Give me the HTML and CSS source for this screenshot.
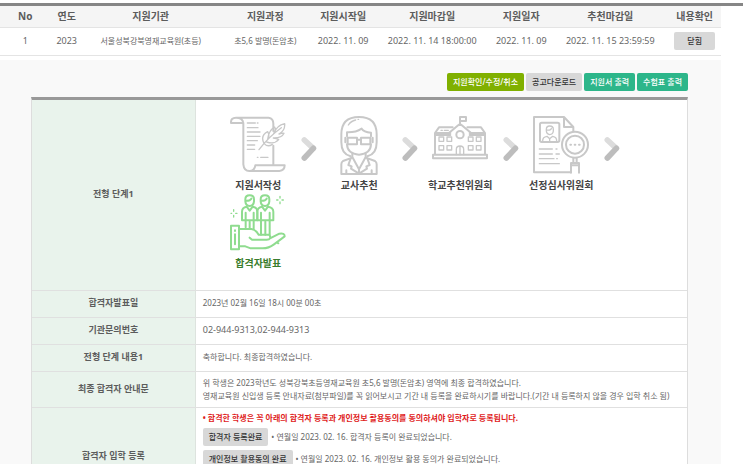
FILE: index.html
```html
<!DOCTYPE html>
<html lang="ko">
<head>
  <meta charset="UTF-8" />
  <meta name="viewport" content="width=device-width, initial-scale=1" />
  <title>지원 현황</title>
  <link rel="stylesheet" href="styles.css">
</head>
<body>
  <svg class="defs" aria-hidden="true">
    <symbol id="arrow" viewBox="0 0 54 78">
      <path d="M13 12L40 37" stroke="#dcdcdc" />
      <path d="M40 37L13 66" stroke="#bdbdbd" />
    </symbol>
  </svg>

  <div class="list-wrap">
    <table class="list">
      <colgroup>
        <col class="c-no"><col class="c-year"><col class="c-org"><col class="c-course"><col class="c-date">
        <col class="c-time"><col class="c-date"><col class="c-time"><col class="c-check">
      </colgroup>
      <thead>
        <tr>
          <th>No</th>
          <th>연도</th>
          <th>지원기관</th>
          <th>지원과정</th>
          <th>지원시작일</th>
          <th>지원마감일</th>
          <th>지원일자</th>
          <th>추천마감일</th>
          <th>내용확인</th>
        </tr>
      </thead>
      <tbody>
        <tr>
          <td class="num">1</td>
          <td class="num">2023</td>
          <td>서울성북강북영재교육원(초등)</td>
          <td>초5,6 발명(돈암초)</td>
          <td class="num">2022. 11. 09</td>
          <td class="num">2022. 11. 14 18:00:00</td>
          <td class="num">2022. 11. 09</td>
          <td class="num">2022. 11. 15 23:59:59</td>
          <td><button type="button" class="btn btn-close">닫힘</button></td>
        </tr>
      </tbody>
    </table>
  </div>

  <div class="detail-wrap">
    <div class="buttons">
      <button type="button" class="btn btn-lime">지원확인/수정/취소</button>
      <button type="button" class="btn">공고다운로드</button>
      <button type="button" class="btn btn-green">지원서 출력</button>
      <button type="button" class="btn btn-green">수험표 출력</button>
    </div>

    <table class="detail">
      <tr>
        <th>전형 단계1</th>
        <td>
          <ul class="steps">
            <li>
              <div class="step">
                <svg class="icon" viewBox="30 30 168 180">
                  <path d="M70 54H33Q32 38 48 38H146Q160 40 160 56V78M70 54V178Q72 198 88 198H178Q194 197 194 181H106Q104 198 88 198M48 38Q68 38 70 54M160 122V181" />
                  <path d="M82 54H106M112 54H114M82 68H114M82 81H120M82 94H120M82 107H112M82 120H104M82 133H104M112 157H114M122 157H144" stroke-width="4" />
                  <path d="M117 134Q145 96 184 68M132 115Q120 92 143 80Q150 92 143 103M143 103Q146 76 164 66Q169 76 161 86M161 86Q170 61 194 56Q196 76 177 87M177 87Q190 83 192 85Q185 100 160 99M160 99Q170 100 176 104Q163 119 140 111M132 115Q143 128 157 118" stroke-width="4" />
                </svg>
                <span>지원서작성</span>
              </div>
              <svg class="next"><use href="#arrow" /></svg>
            </li>
            <li>
              <div class="step">
                <svg class="icon" viewBox="34 30 168 180">
                  <path d="M93 154Q65 148 65 112V88Q65 36 118 36Q171 36 171 88V112Q171 148 143 154" />
                  <path d="M82 94V82Q108 83 126 71Q132 81 154 83V94M82 118Q83 147 118 149Q153 147 154 118" />
                  <path d="M84 98H112V118H84ZM124 98H152V118H124ZM112 104H124M77 98V112M159 98V112" />
                  <path d="M86 60Q94 48 108 45M115 43H117" stroke-width="4" />
                  <path d="M98 146V156L118 193L138 156V146M98 158L70 168Q65 171 65 178V207H171V178Q171 171 166 168L138 158M93 160L86 180L96 184L94 191L118 206L142 191L140 184L150 180L143 160M118 193V206M80 196V206M156 196V206" />
                </svg>
                <span>교사추천</span>
              </div>
              <svg class="next"><use href="#arrow" /></svg>
            </li>
            <li>
              <div class="step">
                <svg class="icon" viewBox="39 30 168 180">
                  <path d="M42 149H204V160H42ZM48 149V84M198 149V84M48 84H94M152 84H198M48 84L60 67H101M198 84L186 67H145M94 90L48 90M152 90H198" />
                  <path d="M86 87L123 56L160 87M123 56V36H141V48H123" />
                  <circle cx="123" cy="89" r="11" />
                  <path d="M60 96H74V109H60ZM84 96H98V109H84ZM148 96H162V109H148ZM172 96H186V109H172ZM60 122H74V135H60ZM84 122H98V135H84ZM148 122H162V135H148ZM172 122H186V135H172ZM112 149V133Q112 123 123 123Q134 123 134 133V149M123 126V149" stroke-width="4" />
                  <path d="M66 76H70M76 76H88" stroke-width="4" />
                </svg>
                <span>학교추천위원회</span>
              </div>
              <svg class="next"><use href="#arrow" /></svg>
            </li>
            <li>
              <div class="step">
                <svg class="icon" viewBox="44 30 168 180">
                  <path d="M158 202H47V36H137L165 66V78M137 36V66H165" />
                  <rect x="65" y="53" width="58" height="58" rx="5" />
                  <path d="M84 73Q84 63 94 63Q105 63 105 73V78Q104 88 94 89Q85 88 84 78ZM84 75Q98 77 99 70M73 109Q72 96 86 94L94 101L103 94Q116 96 115 109M94 101V109" stroke-width="4" />
                  <path d="M63 132H102M113 132H116M63 147H102M113 147H123M63 161H107M115 161H117M63 176H123" stroke-width="4" />
                  <circle cx="170" cy="119" r="39" />
                  <circle cx="170" cy="119" r="27" />
                  <path d="M156 119H158M169 119H171M182 119H184" />
                  <path d="M165 159V170M175 159V170M158 203V174H182V203M158 181H182" />
                </svg>
                <span>선정심사위원회</span>
              </div>
              <svg class="next"><use href="#arrow" /></svg>
            </li>
            <li class="on">
              <div class="step">
                <svg class="icon" viewBox="30 24 168 180">
                  <path d="M76 43Q76 31 89 31Q102 31 102 43V49Q101 62 89 63Q77 62 76 49ZM76 47Q90 48 94 41M122 43Q122 31 135 31Q148 31 148 43V49Q147 62 135 63Q123 62 122 49ZM122 47Q136 48 140 41" />
                  <path d="M80 65Q66 67 66 80V106H77V83M98 65Q112 67 112 80V106H101V83M80 65L89 77L98 65M77 106V127M101 106V131M89 110V128M77 106H101" />
                  <path d="M126 65Q112 67 112 80V106H123V83M144 65Q160 67 160 80V106H149V83M126 65L135 77L144 65M123 106V149M149 106V149M136 110V149M123 106H149" />
                  <path d="M33 122H57V193H33ZM45 136V138M45 148V178M57 132H94Q108 134 116 149H145Q153 152 150 160Q148 164 140 164H96M150 160L178 146Q194 143 194 154L162 178Q146 190 128 190H92L76 184H57M174 175H175M96 164L89 158" />
                  <path d="M180 34V39M180 51V56M170 45H174M186 45H190M41 74V79M41 91V96M33 85H35M47 85H51" stroke-width="4" />
                </svg>
                <span>합격자발표</span>
              </div>
            </li>
          </ul>
        </td>
      </tr>
      <tr>
        <th>합격자발표일</th>
        <td>2023년 02월 16일 18시 00분 00초</td>
      </tr>
      <tr>
        <th>기관문의번호</th>
        <td class="num">02-944-9313,02-944-9313</td>
      </tr>
      <tr>
        <th>전형 단계 내용1</th>
        <td>축하합니다. 최종합격하였습니다.</td>
      </tr>
      <tr>
        <th>최종 합격자 안내문</th>
        <td class="guide">
          위 학생은 2023학년도 성북강북초등영재교육원 초5,6 발명(돈암초) 영역에 최종 합격하였습니다.<br>
          영재교육원 신입생 등록 안내자료(첨부파일)를 꼭 읽어보시고 기간 내 등록을 완료하시기를 바랍니다.(기간 내 등록하지 않을 경우 입학 취소 됨)
        </td>
      </tr>
      <tr class="enroll">
        <th>합격자 입학 등록</th>
        <td>
          <strong class="notice">• 합격한 학생은 꼭 아래의 합격자 등록과 개인정보 활용동의를 동의하셔야 입학자로 등록됩니다.</strong>
          <div class="done"><button type="button" class="btn">합격자 등록완료</button> • 연월일 2023. 02. 16. 합격자 등록이 완료되었습니다.</div>
          <div class="done"><button type="button" class="btn">개인정보 활용동의 완료</button> • 연월일 2023. 02. 16. 개인정보 활용 동의가 완료되었습니다.</div>
        </td>
      </tr>
    </table>
  </div>
</body>
</html>
```

FILE: styles.css
```css
* {
  box-sizing: border-box;
}
body {
  margin: 0;
  padding-top: 3px;
  background: #fff;
  color: #666;
  font-family: "Noto Sans", "Noto Sans CJK KR", sans-serif;
  font-size: 8px;
  line-height: 12px;
}
table {
  width: 100%;
  border-collapse: separate;
  border-spacing: 0;
}
.defs {
  display: none;
}
.num {
  font-size: 9px;
}

/* application list */
.list-wrap {
  border-top: 3px solid #868686;
  padding-right: 22px;
}
.list {
  table-layout: fixed;
  text-align: center;
}
.list th,
.list td {
  padding: 0;
  border-bottom: 1px solid #e4e4e4;
  white-space: nowrap;
}
.list th {
  height: 22px;
  padding-bottom: 2px;
  background: #f5f5f5;
  color: #5c5c5c;
  font-size: 10px;
}
.list td {
  height: 28px;
  padding-bottom: 1px;
}
.c-no { width: 7%; }
.c-year { width: 4.5%; }
.c-org { width: 18.8%; }
.c-course { width: 13%; }
.c-date { width: 8.6%; }
.c-time { width: 16.1%; }
.c-check { width: 7.3%; }

/* buttons */
.btn {
  height: 18px;
  padding: 0 6px;
  border: 0;
  border-radius: 2px;
  background: #d8d8d8;
  color: #333;
  font-family: inherit;
  font-size: 8px;
  font-weight: 500;
  line-height: 18px;
  white-space: nowrap;
  cursor: pointer;
}
.btn-lime {
  background: #80b000;
  color: #fff;
}
.btn-green {
  background: #2db68a;
  color: #fff;
}
.btn-close {
  padding: 0 13px;
}
.buttons {
  display: flex;
  justify-content: flex-end;
  gap: 2px;
  margin-bottom: 6px;
}

/* detail */
.detail-wrap {
  margin: 4px 22px 0 0;
  padding: 13px 33px 30px 31px;
  background: #f9f9f9;
}
.detail {
  border-top: 3px solid #999;
  border-right: 1px solid #ddd;
  border-left: 1px solid #ddd;
  background: #fff;
}
.detail th,
.detail td {
  height: 27px;
  padding: 0 0 2px;
  border-bottom: 1px solid #e0e0e0;
}
.detail th {
  width: 25%;
  border-right: 1px solid #dde3de;
  background: #e9f3ec;
  color: #5c5c5c;
  font-size: 9px;
}
.detail td {
  padding-left: 7px;
}
.detail .guide {
  height: 36px;
  line-height: 13px;
}
.steps {
  display: flex;
  flex-wrap: wrap;
  margin: 0;
  padding: 15px 0 17px 14px;
  list-style: none;
}
.steps li {
  display: flex;
  width: 101px;
}
.step {
  width: 83px;
  color: #444;
  font-size: 10px;
  font-weight: bold;
  line-height: 16px;
  text-align: center;
  white-space: nowrap;
}
.step span {
  display: block;
  margin-top: 2px;
}
.icon {
  display: block;
  width: 56px;
  height: 60px;
  margin: 0 auto;
  fill: none;
  stroke: #c8c8c8;
  stroke-width: 6;
  stroke-linecap: round;
  stroke-linejoin: round;
}
.next {
  width: 18px;
  height: 26px;
  margin-top: 21px;
  fill: none;
  stroke-width: 17;
  stroke-linecap: round;
}
.on .icon {
  stroke: #8fdc8f;
}
.on .step {
  color: #3a7d2c;
}

.detail .enroll th,
.detail .enroll td {
  height: 98px;
}
.detail .enroll td {
  padding-top: 4px;
  vertical-align: top;
}
.notice {
  display: block;
  color: #e01b1b;
}
.done {
  display: flex;
  align-items: center;
  gap: 3px;
  margin-top: 4px;
}
```
